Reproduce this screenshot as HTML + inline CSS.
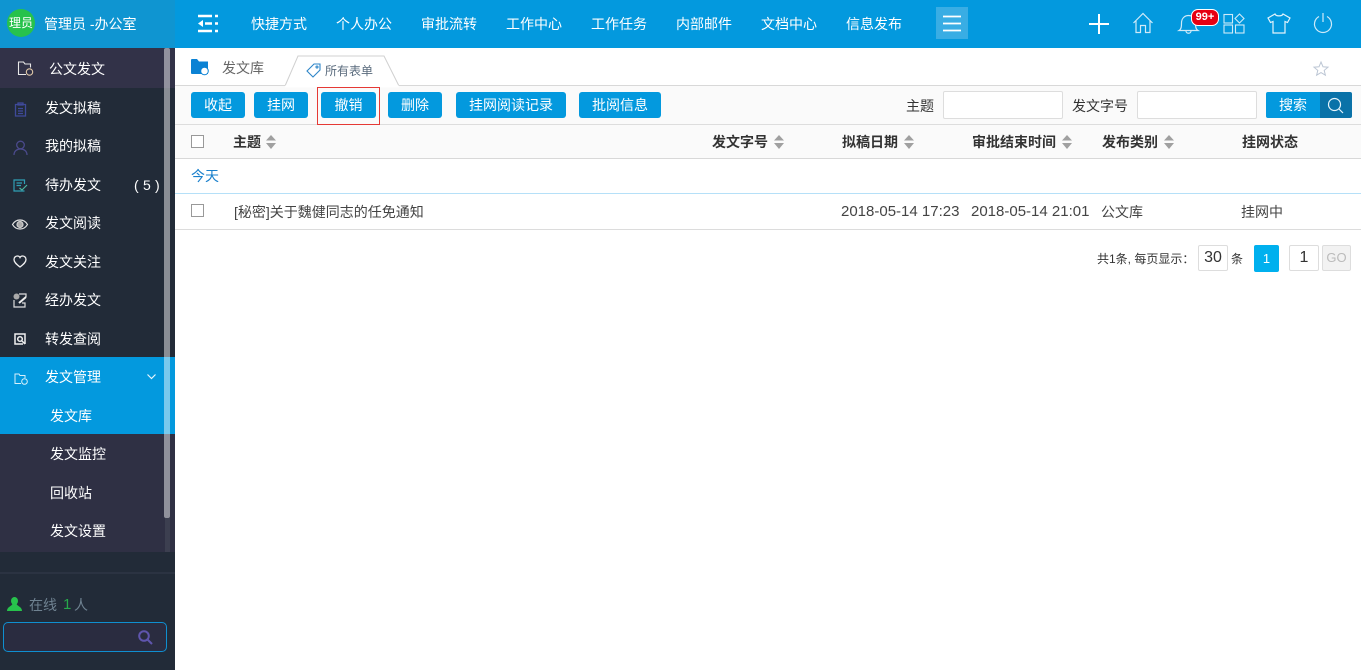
<!DOCTYPE html>
<html lang="zh"><head><meta charset="utf-8"><title>发文库</title>
<style>
*{box-sizing:border-box}
html,body{margin:0;padding:0;width:1361px;height:670px;overflow:hidden;background:#fff;font-family:"Liberation Sans","Noto Sans CJK SC",sans-serif;font-size:14px;color:#333}
.a{position:absolute;white-space:nowrap}
.r{position:absolute}
.m{position:absolute;color:#fff;font-size:14px;line-height:20px;white-space:nowrap}
.n{position:absolute;top:14px;color:#fff;font-size:14px;line-height:20px;white-space:nowrap}
.b{position:absolute;top:92px;height:26px;background:#0399de;color:#fff;border-radius:3px;text-align:center;line-height:26px;font-size:14px}
.t{position:absolute;top:133px;font-weight:bold;font-size:14px;line-height:18px;color:#333;white-space:nowrap}
.c{position:absolute;width:13px;height:13px;border:1px solid #999;background:#fff}
.i{position:absolute;overflow:visible;fill:none}
</style></head><body>

<!-- top bar -->
<div class="r" style="left:0;top:0;width:1361px;height:48px;background:#0399de"></div>
<div class="r" style="left:0;top:0;width:175px;height:48px;background:#0f95d1"></div>
<div class="r" style="left:7px;top:9px;width:28px;height:28px;border-radius:50%;background:#27c24c"></div>
<div class="a" style="left:7px;top:13px;width:28px;text-align:center;color:#fff;font-size:12px;line-height:20px">理员</div>
<div class="a" style="left:44px;top:14px;color:#fff;font-size:14px;line-height:20px">管理员 -办公室</div>

<svg class="i" style="left:198px;top:14px" width="20" height="20" viewBox="0 0 20 20"><path d="M0 2H14M17 2H20M7 9.500H14M17 9.500H20M0 17H14M17 17H20" stroke="#fff" stroke-width="2.600"/><path d="M5 6L0 9.500L5 13Z" fill="#fff"/></svg>
<div class="n" style="left:251px">快捷方式</div>
<div class="n" style="left:336px">个人办公</div>
<div class="n" style="left:421px">审批流转</div>
<div class="n" style="left:506px">工作中心</div>
<div class="n" style="left:591px">工作任务</div>
<div class="n" style="left:676px">内部邮件</div>
<div class="n" style="left:761px">文档中心</div>
<div class="n" style="left:846px">信息发布</div>
<div class="r" style="left:936px;top:7px;width:32px;height:32px;background:#39ade4"></div>
<svg class="i" style="left:942px;top:15px" width="20" height="17" viewBox="0 0 20 17"><path d="M1 1.500H19M1 8.500H19M1 15.500H19" stroke="#fff" stroke-width="1.800"/></svg>

<svg class="i" style="left:1088px;top:13px" width="22" height="22" viewBox="0 0 22 22"><path d="M11 1V21M1 11H21" stroke="#fff" stroke-width="2"/></svg>
<svg class="i" style="left:1132px;top:12px" width="22" height="22" viewBox="0 0 22 22" stroke="#cfeaf8" stroke-width="1.200"><path d="M1.500 11L11 1.500L20.500 11M4 9V20.500H8.500V13.500H13.500V20.500H18V9"/></svg>
<svg class="i" style="left:1178px;top:12px" width="22" height="22" viewBox="0 0 22 22" stroke="#cfeaf8" stroke-width="1.200"><path d="M1 18.500C3.500 17 3.500 14 3.500 11C3.500 6 7 3.500 10.500 3.500C14 3.500 17.500 6 17.500 11C17.500 14 17.500 17 20 18.500ZM8 19C8 22 13 22 13 19"/></svg>
<div class="r" style="left:1191px;top:9px;width:28px;height:17px;background:#e60012;border:1.500px solid #fff;border-radius:7px;color:#fff;font-size:11px;line-height:14px;text-align:center;font-weight:bold">99+</div>
<svg class="i" style="left:1223px;top:13px" width="22" height="21" viewBox="0 0 22 21" stroke="#cfeaf8" stroke-width="1.100"><rect x="1" y="1.500" width="8.500" height="8.500"/><rect x="1" y="12" width="8.500" height="8"/><rect x="12.500" y="12" width="8.500" height="8"/><path d="M16.500 1L21 5.500L16.500 10L12 5.500Z"/></svg>
<svg class="i" style="left:1267px;top:13px" width="24" height="21" viewBox="0 0 24 21" stroke="#e3f3fb" stroke-width="1.200"><path d="M8 1C9 3.500 15 3.500 16 1L23 5L20.500 9.500L18 8.500V20H6V8.500L3.500 9.500L1 5Z"/></svg>
<svg class="i" style="left:1313px;top:13px" width="20" height="20" viewBox="0 0 20 20" stroke="#cfeaf8" stroke-width="1.200"><path d="M6 3.500A8.500 8.500 0 1 0 14 3.500M10 0V9"/></svg>

<!-- sidebar -->
<div class="r" style="left:0;top:48px;width:175px;height:622px;background:#222b38"></div>
<div class="r" style="left:0;top:48px;width:175px;height:40px;background:#323248"></div>
<div class="r" style="left:0;top:357px;width:175px;height:77px;background:#0399de"></div>
<div class="r" style="left:0;top:434px;width:175px;height:118px;background:#2f3044"></div>
<div class="r" style="left:0;top:572px;width:175px;height:2px;background:#2b3342"></div>
<div class="r" style="left:165px;top:518px;width:5px;height:34px;background:#3c3f50"></div>
<div class="r" style="left:164px;top:48px;width:6px;height:470px;background:rgba(255,255,255,.47);border-radius:2px"></div>

<svg class="i" style="left:17px;top:61px" width="17" height="15" viewBox="0 0 17 15" stroke="#e8e8e8" stroke-width="1.100"><path d="M9 13.500H1.500V1H6.500L8 3H13.500V6.500"/><circle cx="12.500" cy="11" r="3.200" stroke="#e0c8a8"/></svg>
<div class="m" style="left:49px;top:59px">公文发文</div>

<svg class="i" style="left:14px;top:102px" width="13" height="15" viewBox="0 0 13 15" stroke="#3f4a9a" stroke-width="1.300"><path d="M1.500 2.500H11.500V14H1.500ZM4 1H9V3H4ZM4 6.500H9M4 9H9M4 11.500H9"/></svg>
<div class="m" style="left:45px;top:98px">发文拟稿</div>

<svg class="i" style="left:13px;top:140px" width="15" height="15" viewBox="0 0 15 15" stroke="#4b4a8c" stroke-width="1.300"><circle cx="7.500" cy="5" r="3.800"/><path d="M1 15C1 11 4 9 7.500 9C11 9 14 11 14 15"/></svg>
<div class="m" style="left:45px;top:136px">我的拟稿</div>

<svg class="i" style="left:13px;top:179px" width="15" height="13" viewBox="0 0 15 13" stroke="#2f9fb5" stroke-width="1.200"><path d="M11.500 5V1H1V12H11.500M3.500 4H9M3.500 6.500H8"/><path d="M6.500 9L9 11L14 6" stroke="#4cb6a0"/></svg>
<div class="m" style="left:45px;top:175px">待办发文</div>
<div class="m" style="left:134px;top:175px">(</div>
<div class="m" style="left:143px;top:175px">5</div>
<div class="m" style="left:155px;top:175px">)</div>

<svg class="i" style="left:12px;top:218px" width="16" height="13" viewBox="0 0 16 13" stroke="#e4e4e4" stroke-width="1.200"><path d="M.5 6.500C4 .5 12 .5 15.500 6.500C12 12.500 4 12.500 .5 6.500Z"/><circle cx="8" cy="6.500" r="3" fill="#aaa" stroke="#ccc"/></svg>
<div class="m" style="left:45px;top:213px">发文阅读</div>

<svg class="i" style="left:13px;top:255px" width="14" height="13" viewBox="0 0 14 13" stroke="#f0f0f0" stroke-width="1.300"><path d="M7 12C3 9 1 7 1 4.500C1 2 3 1 4.500 1C5.500 1 6.500 1.500 7 2.500C7.500 1.500 8.500 1 9.500 1C11 1 13 2 13 4.500C13 7 11 9 7 12Z"/></svg>
<div class="m" style="left:45px;top:252px">发文关注</div>

<svg class="i" style="left:13px;top:293px" width="15" height="15" viewBox="0 0 15 15" stroke="#ddd" stroke-width="1.200"><path d="M1 7V14H12V10H9M6 1H13V4"/><circle cx="3.500" cy="3.500" r="3" fill="#aaa" stroke="none"/><path d="M6 10L13 4" stroke="#eee" stroke-width="2"/></svg>
<div class="m" style="left:45px;top:290px">经办发文</div>

<svg class="i" style="left:14px;top:333px" width="12" height="12" viewBox="0 0 12 12" stroke="#f0f0f0" stroke-width="1.500"><path d="M9 11H1V1H11V11"/><circle cx="6" cy="6" r="2.300"/><path d="M8 8L11 11"/></svg>
<div class="m" style="left:45px;top:329px">转发查阅</div>

<svg class="i" style="left:14px;top:373px" width="14" height="12" viewBox="0 0 14 12" stroke="#d7f0fb" stroke-width="1"><path d="M7 10.500H1V1H5L6 2.500H11V5"/><circle cx="10.500" cy="8.500" r="2.800"/></svg>
<div class="m" style="left:45px;top:367px">发文管理</div>
<svg class="i" style="left:147px;top:374px" width="9" height="6" viewBox="0 0 9 6" stroke="#e6f6fd" stroke-width="1.200"><path d="M.5 .5L4.500 4.500L8.500 .5"/></svg>
<div class="m" style="left:50px;top:406px">发文库</div>
<div class="m" style="left:50px;top:444px">发文监控</div>
<div class="m" style="left:50px;top:483px">回收站</div>
<div class="m" style="left:50px;top:521px">发文设置</div>

<svg class="i" style="left:7px;top:597px" width="15" height="14" viewBox="0 0 15 14"><ellipse cx="7.500" cy="4" rx="3.500" ry="4" fill="#27c24c"/><path d="M0 14C0 10 4 9.500 5.500 7H9.500C11 9.500 15 10 15 14Z" fill="#27c24c"/></svg>
<div class="a" style="left:29px;top:595px;font-size:14px;line-height:20px;color:#6f8291">在线</div>
<div class="a" style="left:63px;top:595px;font-size:15px;line-height:20px;color:#27a84a">1</div>
<div class="a" style="left:74px;top:595px;font-size:14px;line-height:20px;color:#6f8291">人</div>
<div class="r" style="left:3px;top:622px;width:164px;height:30px;background:#2a2c40;border:1px solid #0f8fd0;border-radius:5px"></div>
<svg class="i" style="left:138px;top:630px" width="15" height="15" viewBox="0 0 15 15" stroke="#5f55ad" stroke-width="2"><circle cx="6" cy="6" r="4.800"/><path d="M9.500 9.500L14 14"/></svg>

<!-- tabs -->
<svg class="i" style="left:191px;top:58px" width="18" height="18" viewBox="0 0 18 18"><path d="M0 2C0 1 1 1 1.500 1H6L8 3.500H17V16H1C.5 16 0 15.500 0 15Z" fill="#0b82d4"/><circle cx="13.500" cy="13" r="3.800" fill="#fff" stroke="#0b82d4"/></svg>
<div class="a" style="left:222px;top:58px;font-size:14px;line-height:20px;color:#666">发文库</div>
<div class="r" style="left:175px;top:85px;width:1186px;height:40px;background:#fafafa;border-top:1px solid #d8d8d8;border-bottom:1px solid #ddd"></div>
<svg class="i" style="left:285px;top:55px" width="115" height="32" viewBox="0 0 115 32"><path d="M0 31L13 1H99L114 31" fill="#fff" stroke="#d0d0d0" stroke-width="1"/><path d="M0 31.500H114" stroke="#fff" stroke-width="2"/></svg>
<svg class="i" style="left:306px;top:63px" width="15" height="15" viewBox="0 0 15 15" stroke="#2e86c8" stroke-width="1.100"><path d="M1 8L8 1H14V7L7 14Z"/><circle cx="11" cy="4" r="1"/></svg>
<div class="a" style="left:325px;top:62px;font-size:12px;line-height:18px;color:#5a6b7d">所有表单</div>
<svg class="i" style="left:1313px;top:61px" width="16" height="15" viewBox="0 0 16 15" stroke="#bcc6d4" stroke-width="1"><path d="M8 1L10 5.800L15 6.200L11.200 9.400L12.400 14.200L8 11.600L3.600 14.200L4.800 9.400L1 6.200L6 5.800Z"/></svg>

<!-- toolbar -->
<div class="b" style="left:191px;width:54px">收起</div>
<div class="b" style="left:254px;width:54px">挂网</div>
<div class="r" style="left:317px;top:87px;width:63px;height:38px;border:1px solid #e53935"></div>
<div class="b" style="left:321px;width:55px">撤销</div>
<div class="b" style="left:388px;width:54px">删除</div>
<div class="b" style="left:456px;width:110px">挂网阅读记录</div>
<div class="b" style="left:579px;width:82px">批阅信息</div>
<div class="a" style="left:906px;top:96px;font-size:14px;line-height:20px;color:#333">主题</div>
<div class="r" style="left:943px;top:91px;width:120px;height:28px;background:#fff;border:1px solid #ddd;border-radius:2px"></div>
<div class="a" style="left:1072px;top:96px;font-size:14px;line-height:20px;color:#333">发文字号</div>
<div class="r" style="left:1137px;top:91px;width:120px;height:28px;background:#fff;border:1px solid #ddd;border-radius:2px"></div>
<div class="b" style="left:1266px;width:54px;border-radius:2px 0 0 2px">搜索</div>
<div class="r" style="left:1320px;top:92px;width:32px;height:26px;background:#0a72a8;border-radius:0 2px 2px 0"></div>
<svg class="i" style="left:1327px;top:97px" width="17" height="17" viewBox="0 0 17 17" stroke="#e6f4fb" stroke-width="1.200"><circle cx="7.500" cy="7.500" r="6"/><path d="M12 12L16 16"/></svg>

<!-- table -->
<div class="r" style="left:175px;top:125px;width:1186px;height:34px;background:#fafafa;border-bottom:1px solid #d8d8d8"></div>
<div class="c" style="left:191px;top:135px"></div>
<div class="t" style="left:233px">主题</div>
<div class="t" style="left:712px">发文字号</div>
<div class="t" style="left:842px">拟稿日期</div>
<div class="t" style="left:972px">审批结束时间</div>
<div class="t" style="left:1102px">发布类别</div>
<div class="t" style="left:1242px">挂网状态</div>
<svg class="i" style="left:266px;top:135px" width="10" height="14" viewBox="0 0 10 14"><path d="M5 0L10 5.500H0ZM0 8H10L5 14Z" fill="#a0a0a0"/></svg>
<svg class="i" style="left:774px;top:135px" width="10" height="14" viewBox="0 0 10 14"><path d="M5 0L10 5.500H0ZM0 8H10L5 14Z" fill="#a0a0a0"/></svg>
<svg class="i" style="left:904px;top:135px" width="10" height="14" viewBox="0 0 10 14"><path d="M5 0L10 5.500H0ZM0 8H10L5 14Z" fill="#a0a0a0"/></svg>
<svg class="i" style="left:1062px;top:135px" width="10" height="14" viewBox="0 0 10 14"><path d="M5 0L10 5.500H0ZM0 8H10L5 14Z" fill="#a0a0a0"/></svg>
<svg class="i" style="left:1164px;top:135px" width="10" height="14" viewBox="0 0 10 14"><path d="M5 0L10 5.500H0ZM0 8H10L5 14Z" fill="#a0a0a0"/></svg>

<div class="a" style="left:191px;top:166px;font-size:14px;line-height:20px;color:#1a80cc">今天</div>
<div class="r" style="left:175px;top:193px;width:1186px;height:1px;background:#b5e0f8"></div>
<div class="c" style="left:191px;top:204px"></div>
<div class="a" style="left:234px;top:203px;font-size:14px;line-height:18px;color:#444">[秘密]关于魏健同志的任免通知</div>
<div class="a" style="left:841px;top:203px;font-size:15px;line-height:18px;color:#444">2018-05-14 17:23</div>
<div class="a" style="left:971px;top:203px;font-size:15px;line-height:18px;color:#444">2018-05-14 21:01</div>
<div class="a" style="left:1101px;top:203px;font-size:14px;line-height:18px;color:#444">公文库</div>
<div class="a" style="left:1241px;top:203px;font-size:14px;line-height:18px;color:#444">挂网中</div>
<div class="r" style="left:175px;top:229px;width:1186px;height:1px;background:#dcdcdc"></div>

<!-- pagination -->
<div class="a" style="left:1097px;top:250px;font-size:12px;line-height:18px;color:#333">共1条, 每页显示：</div>
<div class="r" style="left:1198px;top:245px;width:30px;height:26px;border:1px solid #ddd;border-radius:2px;text-align:center;line-height:24px;font-size:16px;color:#333">30</div>
<div class="a" style="left:1231px;top:250px;font-size:12px;line-height:18px;color:#333">条</div>
<div class="r" style="left:1254px;top:245px;width:25px;height:27px;background:#00b0ee;border-radius:2px;text-align:center;line-height:27px;font-size:13px;color:#fff">1</div>
<div class="r" style="left:1289px;top:245px;width:30px;height:26px;border:1px solid #ddd;border-radius:2px;text-align:center;line-height:24px;font-size:16px;color:#333">1</div>
<div class="r" style="left:1322px;top:245px;width:29px;height:26px;background:#f2f2f2;border:1px solid #ddd;border-radius:2px;text-align:center;line-height:24px;font-size:13px;color:#bbb">GO</div>

</body></html>
